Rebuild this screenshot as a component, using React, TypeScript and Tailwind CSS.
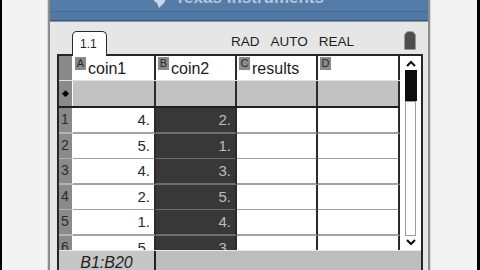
import React from 'react'

const ROWS = [
  ['4.', '2.'],
  ['5.', '1.'],
  ['4.', '3.'],
  ['2.', '5.'],
  ['1.', '4.'],
  ['5.', '3.'],
]

function ColHead({ letter, name }: { letter: string; name?: string }) {
  return (
    <div className="flex items-start border-r-2 border-[#2b2b2b] bg-white pl-[2px] pt-[1px]">
      <span className="flex h-[13px] w-[11px] items-center justify-center bg-[#8a8a8a] text-[11px] leading-none text-[#2a2a2a]">
        {letter}
      </span>
      {name && <span className="ml-[2px] mt-[2px] text-[16px] leading-[20px] text-[#1c1c1c]">{name}</span>}
    </div>
  )
}

function Chevron({ up }: { up?: boolean }) {
  return (
    <svg width="10" height="7" viewBox="0 0 10 7">
      <path
        d={up ? 'M1 6 L5 2 L9 6' : 'M1 1 L5 5 L9 1'}
        fill="none"
        stroke="#111"
        strokeWidth="2.2"
      />
    </svg>
  )
}

function Sheet() {
  return (
    <div className="ml-[7px] w-[366px] border-x-2 border-t-2 border-[#252525]">
      <div className="flex h-[194px]">
        {/* grid */}
        <div className="w-[341px] overflow-hidden">
          <div className="grid h-[24px] grid-cols-[14px_83px_81px_81px_82px]">
            <div className="border-r border-white bg-[#8a8a8a]" />
            <ColHead letter="A" name="coin1" />
            <ColHead letter="B" name="coin2" />
            <ColHead letter="C" name="results" />
            <ColHead letter="D" />
          </div>
          <div className="h-[1px] bg-[#e2e2e2]" />
          <div className="grid h-[25px] grid-cols-[14px_83px_81px_81px_82px] bg-[#c2c2c2]">
            <div className="flex items-center justify-center border-r border-white bg-[#8a8a8a] text-[9px] text-black">◆</div>
            <div className="border-r-2 border-[#2b2b2b]" />
            <div className="border-r-2 border-[#2b2b2b]" />
            <div className="border-r-2 border-[#2b2b2b]" />
            <div className="border-r-2 border-[#2b2b2b]" />
          </div>
          <div className="h-[2px] bg-[#1e1e1e]" />
          {ROWS.map(([a, b], i) => (
            <div key={i} className="grid h-[25.5px] grid-cols-[14px_83px_81px_81px_82px]">
              <div className="border-b-2 border-r border-b-[#b4b4b4] border-r-white bg-[#8a8a8a] pl-[2px] text-[14px] leading-[23px] text-[#2c2c2c]">
                {i + 1}
              </div>
              <div className="border-b-2 border-r-2 border-b-[#a2a2a2] border-r-[#2b2b2b] bg-white pr-[4px] text-right text-[15px] leading-[24px] text-[#2a2a2a]">
                {a}
              </div>
              <div className="border-b-2 border-r-2 border-b-[#6e6e6e] border-r-[#2b2b2b] bg-[#383838] pr-[4px] text-right text-[15px] leading-[24px] text-[#bdbdbd]">
                {b}
              </div>
              <div className="border-b-2 border-r-2 border-b-[#a2a2a2] border-r-[#2b2b2b] bg-white" />
              <div className="border-b-2 border-r-2 border-b-[#a2a2a2] border-r-[#2b2b2b] bg-white" />
            </div>
          ))}
        </div>
        {/* scrollbar */}
        <div className="flex w-[21px] flex-col items-center bg-white">
          <div className="flex h-[14px] w-[16px] items-center justify-center">
            <Chevron up />
          </div>
          <div className="h-[31px] w-[12px] bg-[#0d0d0d]" />
          <div className="h-[135px] w-[11px] border border-[#9a9a9a] bg-white" />
          <div className="flex h-[12px] w-[16px] items-center justify-center">
            <Chevron />
          </div>
        </div>
      </div>
      {/* bottom bar */}
      <div className="flex h-[20px] border-t border-[#e8e8e8]">
        <div className="w-[97px] border-r-2 border-[#222] bg-[#c6c6c6] pt-[4px] text-center text-[16px] italic leading-[16px] text-[#222]">
          B1:B20
        </div>
        <div className="flex-1 bg-[#bdbdbd]" />
      </div>
    </div>
  )
}

function Screen() {
  return (
    <div className="flex w-[378px] flex-col">
      <div className="h-[15px] overflow-hidden bg-[#557ca7]">
        <div className="-mt-[11px] ml-[103px] flex items-start gap-[9px]">
          <svg width="13" height="17" viewBox="0 0 13 17" className="mt-[2px]">
            <path d="M1 0 L10 0 L10 6 L13 8 L11 12 L6 17 L4 12 L1 10 Z" fill="#c9d7e7" />
          </svg>
          <span className="text-[17px] font-bold leading-[17px] text-[#b3c6dd]">Texas Instruments</span>
        </div>
      </div>
      <div className="h-[1px] bg-[#456a93]" />
      <div className="h-[11px] bg-[#5079a5]" />
      <div className="h-[1px] bg-[#3a5374]" />
      <div className="h-[1px] bg-[#8e9aa8]" />
      <div className="flex-1 bg-[#e6e6e6]">
        <div className="flex h-[32px] pl-[22px]">
          <div className="relative z-10 mt-[9px] -mb-[2px] h-[25px] w-[35px] rounded-t-[5px] border-x border-t border-[#2a2a2a] bg-white pl-[7px] pt-[5px] text-[12px] leading-[14px] text-[#222]">
            1.1
          </div>
          <div className="ml-[124px] mt-[12px] flex gap-[11px] text-[13.5px] leading-[16px] text-[#1e1e1e]">
            <span>RAD</span>
            <span>AUTO</span>
            <span>REAL</span>
          </div>
          <div className="ml-auto mr-[12px] mt-[9px] h-[19px] w-[12px] rounded-t-[5px] rounded-b-[1px] border border-[#9a9a9a] bg-[#4e4e4e]" />
        </div>
        <Sheet />
      </div>
    </div>
  )
}

export default function App() {
  return (
    <div className="flex h-[270px] w-[480px] overflow-hidden bg-black font-['Liberation_Sans',Arial,sans-serif]">
      <div className="w-[2px] bg-black" />
      <div className="w-[45px] bg-[#f3f3f3]" />
      <div className="w-[1px] bg-[#d6d6d6]" />
      <div className="w-[2px] bg-[#8e8e8e]" />
      <Screen />
      <div className="w-[2px] bg-[#8e8e8e]" />
      <div className="w-[1px] bg-[#d6d6d6]" />
      <div className="w-[46px] bg-[#f3f3f3]" />
      <div className="w-[3px] bg-black" />
    </div>
  )
}
